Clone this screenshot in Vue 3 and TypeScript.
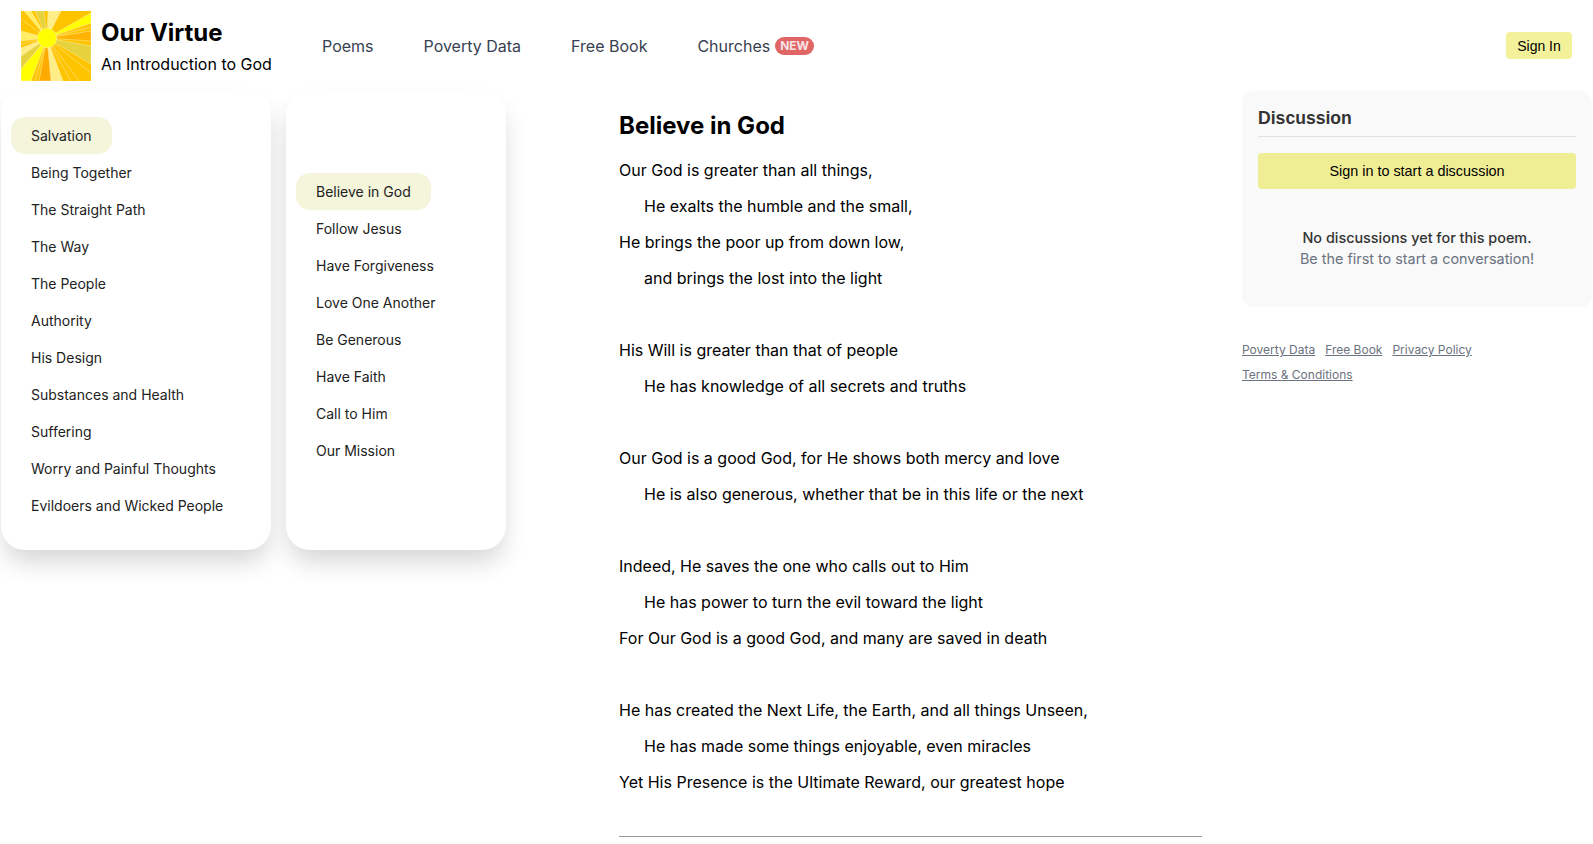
<script setup lang="ts">
const nav = ['Poems', 'Poverty Data', 'Free Book']
const sections = ['Being Together', 'The Straight Path', 'The Way', 'The People', 'Authority', 'His Design', 'Substances and Health', 'Suffering', 'Worry and Painful Thoughts', 'Evildoers and Wicked People']
const poems = ['Follow Jesus', 'Have Forgiveness', 'Love One Another', 'Be Generous', 'Have Faith', 'Call to Him', 'Our Mission']
const stanzas: [string, boolean][][] = [
  [['Our God is greater than all things,', false], ['He exalts the humble and the small,', true], ['He brings the poor up from down low,', false], ['and brings the lost into the light', true]],
  [['His Will is greater than that of people', false], ['He has knowledge of all secrets and truths', true]],
  [['Our God is a good God, for He shows both mercy and love', false], ['He is also generous, whether that be in this life or the next', true]],
  [['Indeed, He saves the one who calls out to Him', false], ['He has power to turn the evil toward the light', true], ['For Our God is a good God, and many are saved in death', false]],
  [['He has created the Next Life, the Earth, and all things Unseen,', false], ['He has made some things enjoyable, even miracles', true], ['Yet His Presence is the Ultimate Reward, our greatest hope', false]],
]
const rays: [string, string][] = [
  ['M26 27 L3 0 L10 0Z', '#ffee66'],
  ['M26 27 L14 0 L23 0Z', '#e6d23c'],
  ['M26 27 L27 0 L40 0Z', '#ffee88'],
  ['M26 27 L70 2 L70 12Z', '#ffff00'],
  ['M26 27 L70 20 L70 30Z', '#ffb300'],
  ['M26 27 L70 35 L70 53Z', '#e6d23c'],
  ['M26 27 L42 70 L30 70Z', '#ffee88'],
  ['M26 27 L30 70 L18 70Z', '#ffaa00'],
  ['M26 27 L10 70 L0 70 L0 58Z', '#ffff00'],
  ['M26 27 L0 58 L0 45Z', '#e6d23c'],
  ['M26 27 L0 45 L0 37Z', '#ffee88'],
  ['M26 27 L0 30 L0 20Z', '#ffee66'],
]
const glints = ['M26 27 L50 70', 'M26 27 L58 70', 'M26 27 L70 62', 'M26 27 L70 16', 'M26 27 L0 8', 'M26 27 L14 70', 'M26 27 L0 33']
</script>

<template>
  <div class="page">
    <header class="header">
      <svg class="logo" viewBox="0 0 70 70" width="70" height="70">
        <rect width="70" height="70" fill="#ffc400" />
        <path v-for="(r, i) in rays" :key="i" :d="r[0]" :fill="r[1]" stroke="#ffeeaa" stroke-width="0.5" />
        <path v-for="g in glints" :key="g" :d="g" stroke="#ffeeaa" stroke-width="0.5" fill="none" />
        <circle cx="26" cy="27" r="9.7" fill="#ffff00" stroke="#ffee99" stroke-width="0.6" />
      </svg>
      <div class="brand">
        <div class="brand-title">Our Virtue</div>
        <div class="brand-sub">An Introduction to God</div>
      </div>
      <nav class="nav">
        <a v-for="n in nav" :key="n" class="nav-link">{{ n }}</a>
        <a class="nav-link churches">Churches<span class="badge">NEW</span></a>
      </nav>
      <button class="signin">Sign In</button>
    </header>

    <div class="body">
      <aside class="menus">
        <div class="panel panel-a">
          <div class="item active">Salvation</div>
          <div v-for="s in sections" :key="s" class="item">{{ s }}</div>
        </div>
        <div class="panel panel-b">
          <div class="item active">Believe in God</div>
          <div v-for="p in poems" :key="p" class="item">{{ p }}</div>
        </div>
      </aside>

      <main class="poem">
        <h1 class="poem-title">Believe in God</h1>
        <div v-for="(st, i) in stanzas" :key="i" class="stanza">
          <p v-for="(l, j) in st" :key="j" class="line" :class="{ indent: l[1] }">{{ l[0] }}</p>
        </div>
        <hr class="rule" />
      </main>

      <aside class="side">
        <section class="card">
          <h2 class="card-title">Discussion</h2>
          <button class="start">Sign in to start a discussion</button>
          <div class="empty">
            <div class="empty-a">No discussions yet for this poem.</div>
            <div class="empty-b">Be the first to start a conversation!</div>
          </div>
        </section>
        <div class="links">
          <a>Poverty Data</a><a>Free Book</a><a>Privacy Policy</a><a>Terms &amp; Conditions</a>
        </div>
      </aside>
    </div>
  </div>
</template>

<style>
html, body { background: #fff; overflow: hidden; }
</style>

<style scoped>
.page { width: 1593px; height: 844px; overflow: hidden; font-family: Inter, "Liberation Sans", sans-serif; color: #000; }
.header { display: flex; align-items: center; height: 91px; margin-bottom: -1px; padding: 0 21px; box-sizing: border-box; }
.logo { flex: none; }
.brand { margin-left: 10px; width: 221px; }
.brand-title { font-size: 24px; font-weight: 700; line-height: 32px; padding-top: 1px; }
.brand-sub { font-size: 16px; line-height: 24px; margin-top: 3px; }
.nav { display: flex; align-items: center; gap: 50px; font-size: 16px; color: #374151; flex: 1; }
.churches { display: flex; align-items: center; gap: 5px; }
.badge { background: #e06666; color: #f7e3e6; font-size: 12px; font-weight: 700; line-height: 18px; padding: 0 5px; border-radius: 9px; }
.signin { font-family: "Liberation Sans", sans-serif; font-size: 14px; background: #f3f29b; border: none; border-radius: 4px; height: 27px; width: 66px; padding: 0; color: #000; }
.body { display: flex; align-items: flex-start; }
.menus { display: flex; gap: 15px; width: 619px; flex: none; padding-left: 1px; box-sizing: border-box; }
.panel { background: #fff; border-radius: 24px; height: 460px; box-sizing: border-box; padding: 27px 10px 0; box-shadow: 0 15px 25px -3px rgba(0,0,0,.16); font-size: 14px; color: #222; }
.panel-a { width: 270px; }
.panel-b { width: 220px; padding-top: 83px; }
.item { height: 37px; line-height: 37px; padding: 0 20px; white-space: nowrap; width: fit-content; box-sizing: border-box; }
.active { background: #f5f5dc; border-radius: 14px; }
.poem { width: 583px; flex: none; font-size: 16px; }
.poem-title { font-size: 24px; font-weight: 700; line-height: 32px; margin: 20px 0 10px; }
.stanza { margin-bottom: 36px; }
.line { margin: 0; line-height: 36px; white-space: nowrap; }
.indent { padding-left: 25px; }
.rule { border: none; border-top: 1px solid #999; margin: 0; }
.side { margin-left: 40px; margin-top: 1px; width: 350px; flex: none; }
.card { background: #f9f9f9; border-radius: 12px; height: 216px; padding: 17px 16px 16px; box-sizing: border-box; }
.card-title { font-family: "Liberation Sans", sans-serif; font-size: 17.6px; font-weight: 700; color: #333; line-height: 21px; margin: 0; padding-bottom: 7px; border-bottom: 1px solid #e0e0e0; }
.start { display: block; width: 100%; height: 36px; margin-top: 16px; border: none; border-radius: 4px; background: #f0ee95; font-family: "Liberation Sans", sans-serif; font-size: 14.4px; color: #000; padding: 0; }
.empty { text-align: center; font-size: 14.4px; margin-top: 38px; line-height: 21px; }
.empty-a { color: #333; font-weight: 500; }
.empty-b { color: #6b7280; }
.links { display: flex; flex-wrap: wrap; column-gap: 10px; margin-top: 30px; font-size: 12px; line-height: 25px; color: #6b7280; width: 300px; }
.links a { text-decoration: underline; }
</style>
